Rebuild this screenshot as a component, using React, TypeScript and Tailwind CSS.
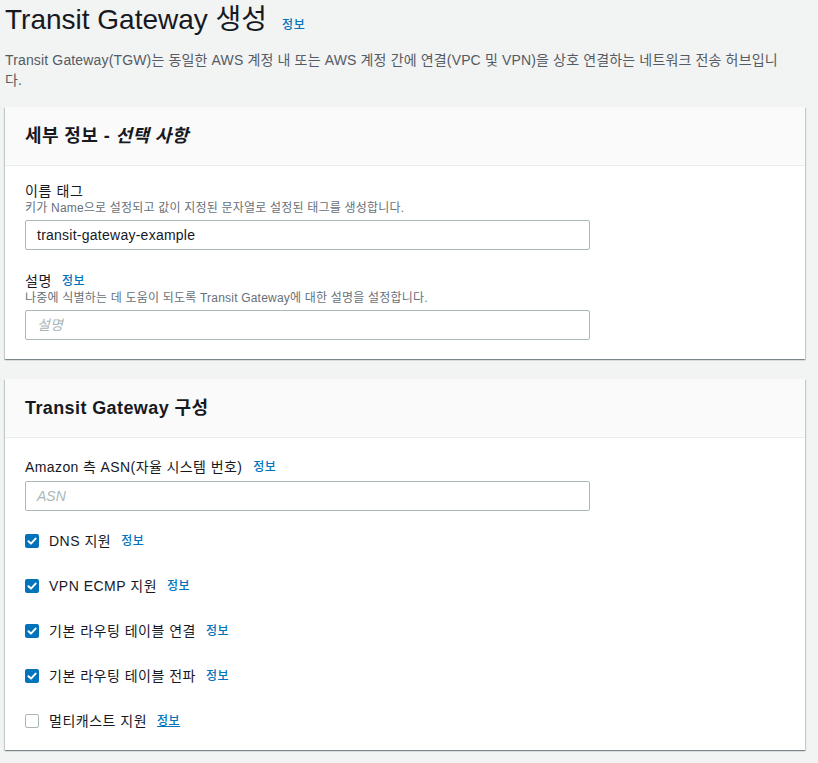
import React from "react";

const font = { fontFamily: '"Liberation Sans", "Noto Sans CJK KR", sans-serif' };

function Info({ underline = false, ml = "ml-[12px]" }: { underline?: boolean; ml?: string }) {
  return (
    <span className={`text-[12px] font-medium text-[#0073bb] tracking-[0.5px] ${ml} ${underline ? "underline" : ""}`}>정보</span>
  );
}

function Check({ checked, label, underline }: { checked: boolean; label: string; underline?: boolean }) {
  return (
    <div className="flex items-center h-[20px]">
      {checked ? (
        <span className="w-[14px] h-[14px] rounded-[2px] bg-[#0073bb] flex items-center justify-center">
          <svg width="10" height="10" viewBox="0 0 10 10">
            <path d="M1.5 5.2 L4 7.6 L8.6 2.6" stroke="white" strokeWidth="2" fill="none" strokeLinecap="round" strokeLinejoin="round" />
          </svg>
        </span>
      ) : (
        <span className="w-[14px] h-[14px] rounded-[2px] border border-[#aab7b8] bg-white" />
      )}
      <span className="ml-[10px] text-[14px] text-[#16191f] tracking-[0.5px]">{label}</span>
      <Info underline={underline} ml="ml-[10px]" />
    </div>
  );
}

function Card({ title, children }: { title: React.ReactNode; children: React.ReactNode }) {
  return (
    <div className="bg-white shadow-[0_1px_1px_0_rgba(0,28,36,0.3),1px_1px_1px_0_rgba(0,28,36,0.15),-1px_1px_1px_0_rgba(0,28,36,0.15)]">
      <div className="bg-[#fafafa] border-b border-[#eaeded] h-[59px] flex items-center px-[20px]">
        <h2 className="text-[18px] font-bold text-[#16191f] tracking-[0.4px]">{title}</h2>
      </div>
      <div className="px-[20px] pt-[15px] pb-[19px]">{children}</div>
    </div>
  );
}

export default function App() {
  return (
    <div className="min-h-[763px] bg-[#f2f3f3] px-[5px] w-[818px]" style={font}>
      <div className="w-[800px]">
        <div className="flex items-baseline pt-[2px]">
          <h1 className="text-[28px] text-[#16191f] leading-[36px]">Transit Gateway 생성</h1>
          <span className="text-[12px] font-medium text-[#0073bb] ml-[15px] tracking-[0.5px]">정보</span>
        </div>
        <p className="text-[14px] text-[#545b64] leading-[20px] mt-[12px] tracking-[0.15px]">
          Transit Gateway(TGW)는 동일한 AWS 계정 내 또는 AWS 계정 간에 연결(VPC 및 VPN)을 상호 연결하는 네트워크 전송 허브입니
          <br />다.
        </p>
        <div className="mt-[17px]">
          <Card
            title={
              <>
                세부 정보 - <i>선택 사항</i>
              </>
            }
          >
            <div className="text-[14px] text-[#16191f] leading-[20px] tracking-[0.6px]">이름 태그</div>
            <div className="text-[12px] text-[#687078] leading-[14px] tracking-[0.2px]">키가 Name으로 설정되고 값이 지정된 문자열로 설정된 태그를 생성합니다.</div>
            <div className="mt-[5px] w-[565px] h-[30px] border border-[#aab7b8] rounded-[2px] flex items-center px-[11px] text-[14px] text-[#16191f] tracking-[0.25px]">
              transit-gateway-example
            </div>
            <div className="mt-[21px] flex items-center text-[14px] text-[#16191f] leading-[20px] tracking-[0.6px]">
              설명<Info ml="ml-[10px]" />
            </div>
            <div className="text-[12px] text-[#687078] leading-[14px] tracking-[0.2px]">나중에 식별하는 데 도움이 되도록 Transit Gateway에 대한 설명을 설정합니다.</div>
            <div className="mt-[5px] w-[565px] h-[30px] border border-[#aab7b8] rounded-[2px] flex items-center px-[11px] text-[14px] text-[#aab7b8] italic">
              설명
            </div>
          </Card>
        </div>
        <div className="mt-[20px]">
          <Card title="Transit Gateway 구성">
            <div className="mt-[4px] flex items-center text-[14px] text-[#16191f] leading-[20px] tracking-[0.4px]">
              Amazon 측 ASN(자율 시스템 번호)<Info ml="ml-[11px]" />
            </div>
            <div className="mt-[4px] w-[565px] h-[30px] border border-[#aab7b8] rounded-[2px] flex items-center px-[11px] text-[14px] text-[#aab7b8] italic">
              ASN
            </div>
            <div className="mt-[20px] flex flex-col gap-[25px]">
              <Check checked label="DNS 지원" />
              <Check checked label="VPN ECMP 지원" />
              <Check checked label="기본 라우팅 테이블 연결" />
              <Check checked label="기본 라우팅 테이블 전파" />
              <Check checked={false} label="멀티캐스트 지원" underline />
            </div>
          </Card>
        </div>
      </div>
    </div>
  );
}
